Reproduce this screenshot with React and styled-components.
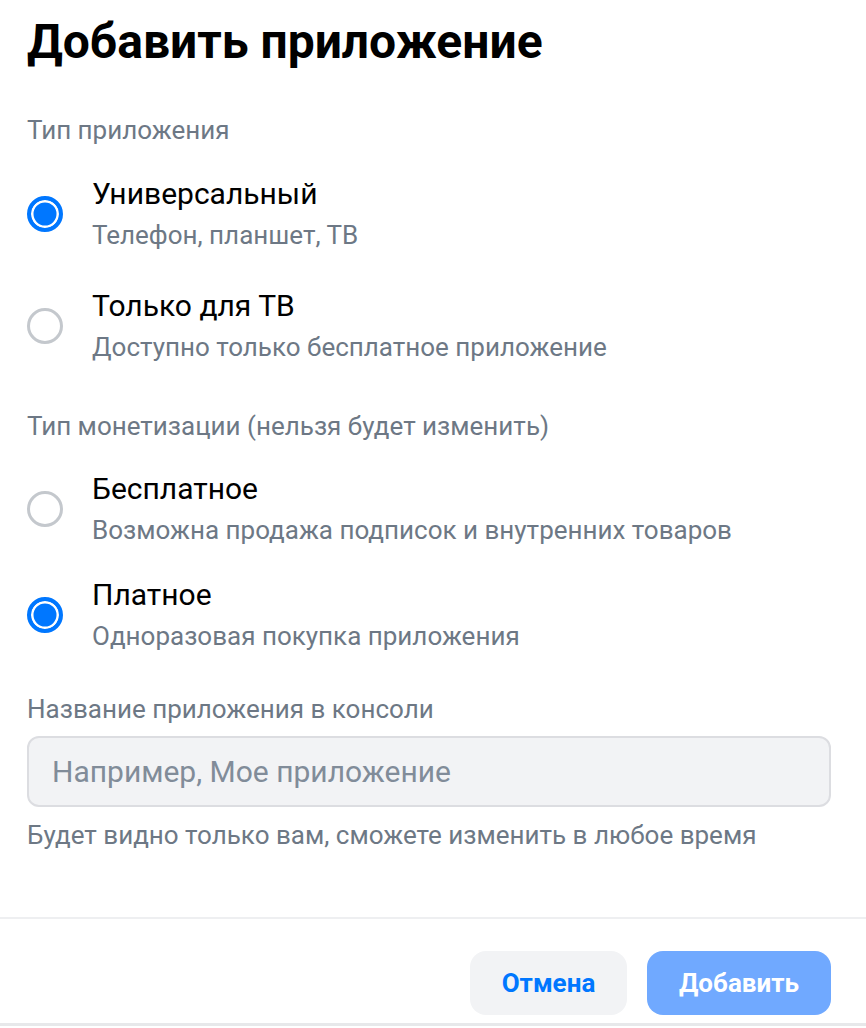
import React, { useState } from "react";
import styled, { createGlobalStyle } from "styled-components";

const Global = createGlobalStyle`
  html, body { margin: 0; padding: 0; background: #fff; }
  body { font-family: Roboto, "Noto Sans", "Liberation Sans", sans-serif; -webkit-font-smoothing: antialiased; }
  * { box-sizing: border-box; }
`;

const Modal = styled.div`
  width: 866px;
  height: 1028px;
  display: flex;
  flex-direction: column;
  background: #fff;
  overflow: hidden;
`;

const Body = styled.div`
  flex: 1;
  padding: 12px 35px 0 27px;
  display: flex;
  flex-direction: column;
`;

const Title = styled.h1`
  margin: 0;
  font-size: 48px;
  line-height: 60px;
  font-weight: 700;
  color: #000;
`;

const SectionLabel = styled.div`
  font-size: 26px;
  line-height: 32px;
  color: #6d7885;
  margin-top: ${(p) => p.$top}px;
`;

const OptionList = styled.div`
  display: flex;
  flex-direction: column;
  gap: ${(p) => p.$gap}px;
  margin-top: ${(p) => p.$top}px;
`;

const OptionRow = styled.label`
  display: flex;
  align-items: center;
  gap: 29px;
  cursor: pointer;
`;

const Radio = styled.span`
  flex: none;
  width: 36px;
  height: 36px;
  border-radius: 50%;
  border: ${(p) => (p.$checked ? "4px solid #0077ff" : "3px solid #c4c8cd")};
  background: ${(p) => (p.$checked ? "#0077ff" : "#fff")};
  box-shadow: ${(p) => (p.$checked ? "inset 0 0 0 2.5px #fff" : "none")};
`;

const OptionText = styled.div`
  display: flex;
  flex-direction: column;
`;

const OptionTitle = styled.div`
  font-size: 30px;
  line-height: 36px;
  color: #000;
`;

const OptionSub = styled.div`
  font-size: 26px;
  line-height: 32px;
  color: #6d7885;
  margin-top: 7px;
`;

const Input = styled.input`
  margin-top: 11px;
  width: 100%;
  height: 71px;
  border-radius: 12px;
  border: 2px solid #dcdde1;
  background: #f2f3f5;
  padding: 0 23px;
  font-family: inherit;
  font-size: 30px;
  color: #000;
  outline: none;
  &::placeholder { color: #818c99; }
`;

const Hint = styled.div`
  margin-top: 12px;
  font-size: 26px;
  line-height: 32px;
  color: #6d7885;
`;

const Footer = styled.div`
  border-top: 2px solid #eeeff1;
  border-bottom: 3px solid #e7e8ea;
  height: 109px;
  display: flex;
  justify-content: flex-end;
  align-items: flex-start;
  gap: 20px;
  padding: 32px 35px 0 0;
  margin-bottom: 2px;
`;

const Button = styled.button`
  height: 64px;
  padding: 0;
  width: ${(p) => p.$w}px;
  border: none;
  border-radius: 16px;
  font-family: inherit;
  font-size: 26px;
  font-weight: 700;
  background: ${(p) => (p.$primary ? "#70a9ff" : "#f2f3f5")};
  color: ${(p) => (p.$primary ? "#fff" : "#0077ff")};
  cursor: pointer;
`;

function Option({ title, sub, checked, onClick }) {
  return (
    <OptionRow onClick={onClick}>
      <Radio $checked={checked} />
      <OptionText>
        <OptionTitle>{title}</OptionTitle>
        <OptionSub>{sub}</OptionSub>
      </OptionText>
    </OptionRow>
  );
}

export default function App() {
  const [type, setType] = useState("universal");
  const [money, setMoney] = useState("paid");
  return (
    <>
      <Global />
      <Modal>
        <Body>
          <Title>Добавить приложение</Title>
          <SectionLabel $top={42}>Тип приложения</SectionLabel>
          <OptionList $gap={37} $top={30}>
            <Option
              title="Универсальный"
              sub="Телефон, планшет, ТВ"
              checked={type === "universal"}
              onClick={() => setType("universal")}
            />
            <Option
              title="Только для ТВ"
              sub="Доступно только бесплатное приложение"
              checked={type === "tv"}
              onClick={() => setType("tv")}
            />
          </OptionList>
          <SectionLabel $top={47}>Тип монетизации (нельзя будет изменить)</SectionLabel>
          <OptionList $gap={31} $top={29}>
            <Option
              title="Бесплатное"
              sub="Возможна продажа подписок и внутренних товаров"
              checked={money === "free"}
              onClick={() => setMoney("free")}
            />
            <Option
              title="Платное"
              sub="Одноразовая покупка приложения"
              checked={money === "paid"}
              onClick={() => setMoney("paid")}
            />
          </OptionList>
          <SectionLabel $top={41}>Название приложения в консоли</SectionLabel>
          <Input placeholder="Например, Мое приложение" />
          <Hint>Будет видно только вам, сможете изменить в любое время</Hint>
        </Body>
        <Footer>
          <Button $w={157}>Отмена</Button>
          <Button $w={184} $primary>Добавить</Button>
        </Footer>
      </Modal>
    </>
  );
}
